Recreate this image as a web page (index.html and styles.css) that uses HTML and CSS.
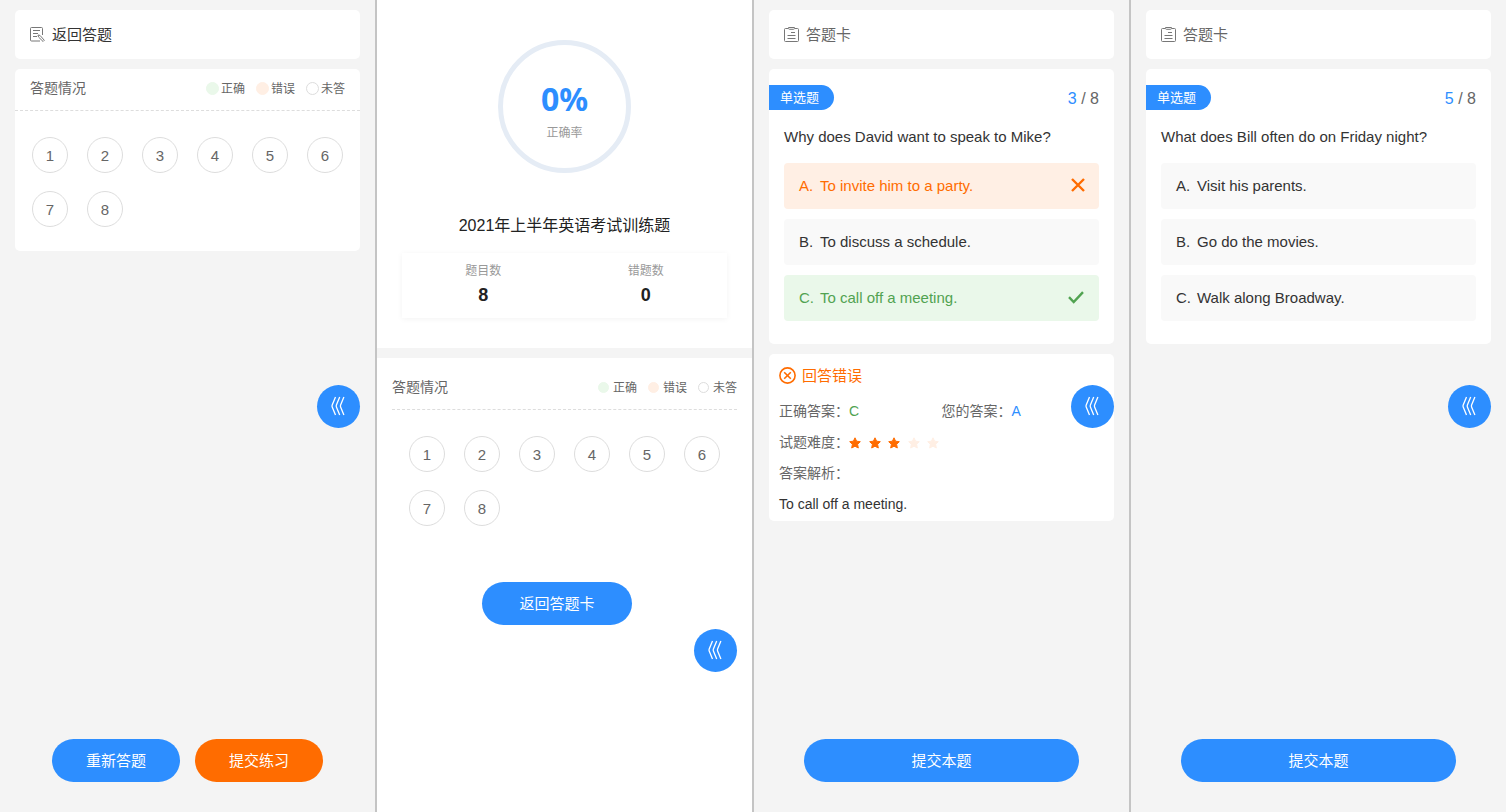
FILE: index.html
```
<!DOCTYPE html>
<html lang="zh-CN">
<head>
  <meta charset="UTF-8">
  <meta name="viewport" content="width=device-width, initial-scale=1">
  <title>英语考试训练题</title>
  <link rel="stylesheet" href="styles.css">
</head>
<body>
  <!-- shared icons -->
  <svg class="sprite" aria-hidden="true">
    <symbol id="icon-edit" viewBox="0 0 15 15">
      <path d="M12.500 8V1.500a1 1 0 0 0-1-1h-10a1 1 0 0 0-1 1v11.500a1 1 0 0 0 1 1H10" />
      <path d="M3 3.500h7M3 6.500h5M3 9.500h4" />
      <path d="M8 8l2 .4 4.300 4.900-1.200 1.200L8.500 10z" />
    </symbol>
    <symbol id="icon-card" viewBox="0 0 15 15">
      <path d="M4 1.500H1.500a1 1 0 0 0-1 1v11a1 1 0 0 0 1 1h12a1 1 0 0 0 1-1v-11a1 1 0 0 0-1-1H11" />
      <path d="M4.500.5h6v.8a1 1 0 0 1-1 1h-4a1 1 0 0 1-1-1z" />
      <path d="M7 5.500h4M3.500 8.500h8M3.500 11.500h8" />
    </symbol>
    <symbol id="icon-arrows" viewBox="0 0 14 20">
      <path d="M4.500 1 1.200 9q-.4 1 0 2l3.300 8M8.700 1 5.400 9q-.4 1 0 2l3.300 8M12.900 1 9.600 9q-.4 1 0 2l3.300 8" />
    </symbol>
    <symbol id="icon-star" viewBox="0 0 12 12">
      <path d="M6 .8l1.600 3.400 3.700.5-2.700 2.600.7 3.700L6 9.200 2.700 11l.7-3.700L.7 4.700l3.700-.5z" />
    </symbol>
  </svg>

  <main class="screens">
    <!-- Answer sheet -->
    <section class="screen">
      <a class="card top-link dark" href="#">
        <svg class="icon"><use href="#icon-edit" /></svg>返回答题
      </a>
      <div class="card">
        <div class="sheet-head">
          <h2>答题情况</h2>
          <ul class="legend">
            <li class="right">正确</li>
            <li class="wrong">错误</li>
            <li>未答</li>
          </ul>
        </div>
        <div class="numbers">
          <button>1</button>
          <button>2</button>
          <button>3</button>
          <button>4</button>
          <button>5</button>
          <button>6</button>
          <button>7</button>
          <button>8</button>
        </div>
      </div>
      <div class="actions two">
        <button class="btn">重新答题</button>
        <button class="btn orange">提交练习</button>
      </div>
      <button class="float-btn" aria-label="展开"><svg><use href="#icon-arrows" /></svg></button>
    </section>

    <!-- Result -->
    <section class="screen result">
      <div class="summary">
        <div class="ring">
          <strong>0%</strong>
          <span>正确率</span>
        </div>
        <h1>2021年上半年英语考试训练题</h1>
        <dl class="totals">
          <div>
            <dt>题目数</dt>
            <dd>8</dd>
          </div>
          <div>
            <dt>错题数</dt>
            <dd>0</dd>
          </div>
        </dl>
      </div>
      <div class="sheet">
        <div class="sheet-head">
          <h2>答题情况</h2>
          <ul class="legend">
            <li class="right">正确</li>
            <li class="wrong">错误</li>
            <li>未答</li>
          </ul>
        </div>
        <div class="numbers">
          <button>1</button>
          <button>2</button>
          <button>3</button>
          <button>4</button>
          <button>5</button>
          <button>6</button>
          <button>7</button>
          <button>8</button>
        </div>
        <div class="back">
          <button class="btn">返回答题卡</button>
        </div>
      </div>
      <button class="float-btn low" aria-label="展开"><svg><use href="#icon-arrows" /></svg></button>
    </section>

    <!-- Answered question -->
    <section class="screen">
      <a class="card top-link" href="#">
        <svg class="icon"><use href="#icon-card" /></svg>答题卡
      </a>
      <div class="card question">
        <div class="question-head">
          <span class="tag">单选题</span>
          <span class="count"><b>3</b> / 8</span>
        </div>
        <p>Why does David want to speak to Mike?</p>
        <button class="option wrong">
          <span class="key">A.</span>To invite him to a party.
          <svg class="mark" viewBox="0 0 16 16"><path d="M2 2l12 12M14 2L2 14" /></svg>
        </button>
        <button class="option"><span class="key">B.</span>To discuss a schedule.</button>
        <button class="option right">
          <span class="key">C.</span>To call off a meeting.
          <svg class="mark tick" viewBox="0 0 16 16"><path d="M1 8.200l4.700 4.800L15 3.200" /></svg>
        </button>
      </div>
      <div class="card analysis">
        <h2>
          <svg viewBox="0 0 17 17"><circle cx="8.500" cy="8.500" r="7.600" /><path d="M5.200 5.200l6.600 6.600M11.800 5.200l-6.600 6.600" /></svg>回答错误
        </h2>
        <div class="answers">
          <span>正确答案：<b class="green">C</b></span>
          <span>您的答案：<b class="blue">A</b></span>
        </div>
        <div class="level">
          试题难度：
          <span class="stars">
            <svg><use href="#icon-star" /></svg>
            <svg><use href="#icon-star" /></svg>
            <svg><use href="#icon-star" /></svg>
            <svg class="off"><use href="#icon-star" /></svg>
            <svg class="off"><use href="#icon-star" /></svg>
          </span>
        </div>
        <div>答案解析：</div>
        <p>To call off a meeting.</p>
      </div>
      <div class="actions">
        <button class="btn">提交本题</button>
      </div>
      <button class="float-btn" aria-label="展开"><svg><use href="#icon-arrows" /></svg></button>
    </section>

    <!-- Unanswered question -->
    <section class="screen">
      <a class="card top-link" href="#">
        <svg class="icon"><use href="#icon-card" /></svg>答题卡
      </a>
      <div class="card question">
        <div class="question-head">
          <span class="tag">单选题</span>
          <span class="count"><b>5</b> / 8</span>
        </div>
        <p>What does Bill often do on Friday night?</p>
        <button class="option"><span class="key">A.</span>Visit his parents.</button>
        <button class="option"><span class="key">B.</span>Go do the movies.</button>
        <button class="option"><span class="key">C.</span>Walk along Broadway.</button>
      </div>
      <div class="actions">
        <button class="btn">提交本题</button>
      </div>
      <button class="float-btn" aria-label="展开"><svg><use href="#icon-arrows" /></svg></button>
    </section>
  </main>
</body>
</html>
```
FILE: styles.css
```
*, *::before { box-sizing: border-box; margin: 0; padding: 0; }
body { font-family: "Liberation Sans", "Noto Sans CJK SC", sans-serif; font-size: 15px; color: #666; }
button { font: inherit; color: inherit; border: none; background: none; cursor: pointer; }
a { color: inherit; text-decoration: none; }
ul { list-style: none; }
h1, h2 { font-weight: normal; }
svg { fill: none; stroke: currentColor; flex-shrink: 0; }
.sprite { display: none; }

.screens { display: grid; grid-template-columns: repeat(4, 1fr); gap: 2px; min-height: 100vh; background: #c4c4c4; }
.screen { position: relative; display: flex; flex-direction: column; gap: 10px; padding: 10px 15px 30px; background: #f4f4f4; }
.card { background: #fff; border-radius: 5px; }

.top-link { display: flex; align-items: center; gap: 7px; padding: 0 15px; line-height: 49px; }
.top-link.dark { color: #333; }
.icon { width: 15px; height: 15px; color: #777; }

/* answer sheet */
.sheet-head { display: flex; justify-content: space-between; align-items: center; height: 42px; padding: 0 15px 2px; border-bottom: 1px dashed #ddd; }
.sheet-head h2 { font-size: 14px; line-height: 20px; padding-bottom: 1px; }
.legend { display: flex; gap: 11px; font-size: 12px; line-height: 20px; }
.legend li { display: flex; align-items: center; gap: 2px; }
.legend li::before { content: ""; width: 13px; height: 13px; border: 1px solid #ddd; border-radius: 50%; }
.legend .right::before { background: #eaf8ea; border-color: #eaf8ea; }
.legend .wrong::before { background: #ffefe4; border-color: #ffefe4; }
.numbers { display: flex; flex-wrap: wrap; gap: 18px 19px; padding: 26px 17px 24px; }
.numbers button { width: 36px; height: 36px; border: 1px solid #ddd; border-radius: 50%; }

/* buttons */
.actions { display: flex; gap: 15px; margin-top: auto; padding: 0 35px; }
.actions.two { padding: 0 37px; }
.actions .btn { flex: 1; }
.btn { height: 43px; padding-bottom: 2px; border-radius: 22px; background: #2d8eff; color: #fff; }
.btn.orange { background: #ff6c00; }
.float-btn { position: absolute; top: 385px; right: 15px; display: flex; align-items: center; justify-content: center; width: 43px; height: 43px; padding: 0 2px 2px 0; border-radius: 50%; background: #2d8eff; color: #fff; }
.float-btn.low { top: 629px; }
.float-btn svg { width: 14px; height: 20px; stroke-width: 1.3; }

/* result */
.result { padding: 0; }
.summary { padding: 40px 25px 30px; background: #fff; text-align: center; }
.ring { display: flex; flex-direction: column; align-items: center; justify-content: center; width: 133px; height: 133px; margin: 0 auto; padding-top: 10px; border: 5px solid #e5ecf5; border-radius: 50%; }
.ring strong { font-family: "Noto Sans", sans-serif; font-size: 32px; line-height: 42px; color: #2d8eff; }
.ring span { font-size: 12px; line-height: 26px; color: #999; }
.summary h1 { margin: 41px 0 15px; font-size: 16px; line-height: 24px; color: #222; }
.totals { display: grid; grid-template-columns: 1fr 1fr; height: 65px; padding-top: 6px; box-shadow: 0 1px 6px rgba(0, 0, 0, 0.05); }
.totals dt { font-size: 12px; line-height: 24px; color: #999; }
.totals dd { font-size: 18px; line-height: 24px; font-weight: bold; color: #222; }
.sheet { flex: 1; padding: 10px 15px 30px; background: #fff; }
.sheet .sheet-head { padding: 0 0 2px; }
.sheet .legend li { gap: 4px; }
.sheet .legend li::before { width: 11px; height: 11px; }
.back { padding: 32px 15px 0 0; text-align: center; }
.back .btn { width: 150px; }

/* question */
.question { display: flex; flex-direction: column; gap: 10px; padding: 16px 15px 23px; }
.question-head { display: flex; justify-content: space-between; align-items: flex-start; height: 25px; }
.tag { margin-left: -15px; padding: 0 15px 0 11px; border-radius: 0 13px 13px 0; background: #2d8eff; color: #fff; font-size: 13px; line-height: 25px; }
.count { font-size: 16px; line-height: 27px; }
.count b { font-weight: normal; color: #2d8eff; }
.question p { line-height: 33px; color: #333; }
.option { display: flex; align-items: center; height: 46px; padding: 0 13px 2px 15px; border-radius: 4px; background: #f9f9f9; color: #333; text-align: left; }
.option.wrong { background: #ffefe4; color: #ff6c00; }
.option.right { background: #eaf8ea; color: #51a351; }
.key { width: 21px; }
.mark { width: 16px; height: 16px; margin-left: auto; stroke-width: 2.4; }
.tick { margin-right: 2px; }

/* answer analysis */
.analysis { padding: 0 10px; font-size: 14px; line-height: 31px; }
.analysis h2 { display: flex; align-items: center; gap: 6px; height: 42px; font-size: 15px; color: #ff6c00; }
.analysis h2 svg { width: 17px; height: 17px; stroke-width: 1.6; }
.analysis b { font-weight: normal; }
.analysis p { padding-bottom: 1px; color: #333; }
.answers { display: grid; grid-template-columns: 1fr 1fr; }
.green { color: #51a351; }
.blue { color: #2d8eff; }
.level, .stars { display: flex; align-items: center; }
.stars { justify-content: space-between; width: 90px; }
.stars svg { width: 12px; height: 12px; fill: #ff6c00; stroke: #ff6c00; stroke-linejoin: round; }
.stars .off { fill: #ffefe4; stroke: #ffefe4; }
```
